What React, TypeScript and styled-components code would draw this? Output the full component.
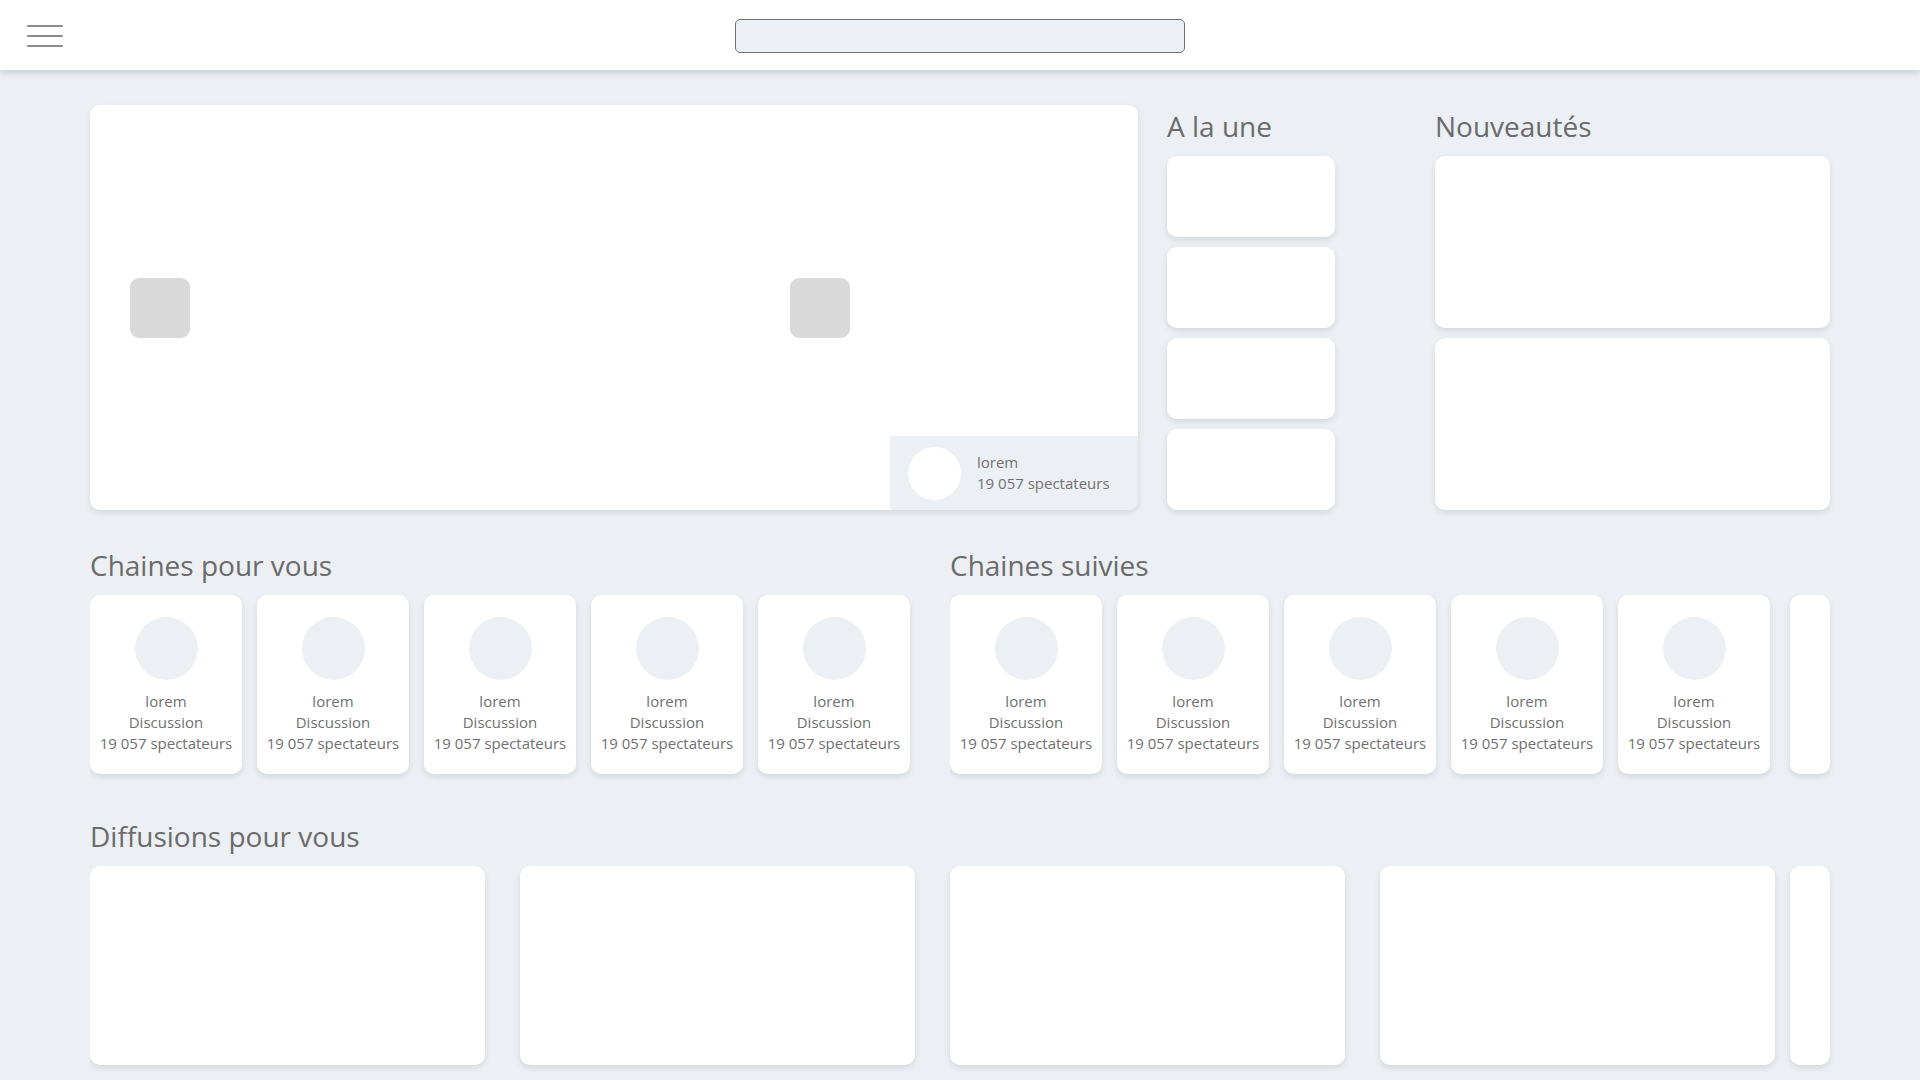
import React from 'react';
import styled, { createGlobalStyle } from 'styled-components';

const GlobalStyle = createGlobalStyle`
  * {
    box-sizing: border-box;
  }

  html,
  body {
    margin: 0;
    padding: 0;
    background: #ecf0f4;
    font-family: 'Open Sans', 'Noto Sans', sans-serif;
    color: #707070;
    overflow-x: hidden;
  }
`;

const Header = styled.header`
  height: 70px;
  background: #ffffff;
  box-shadow: 0 3px 6px rgba(0, 0, 0, 0.14);
  display: grid;
  grid-template-columns: 1fr 450px 1fr;
  align-items: center;
  padding: 0 27px;
  position: relative;
  z-index: 2;
`;

const Burger = styled.button`
  width: 36px;
  height: 22px;
  margin-top: 1px;
  padding: 0;
  border: 0;
  background: transparent;
  display: flex;
  flex-direction: column;
  justify-content: space-between;
  cursor: pointer;

  span {
    display: block;
    height: 2px;
    background: #8a8a8a;
    border-radius: 1px;
  }
`;

const Search = styled.input`
  width: 450px;
  height: 34px;
  margin-top: 1px;
  border: 1px solid #707070;
  border-radius: 5px;
  background: #ecf0f4;
  outline: none;
`;

const Main = styled.main`
  width: 1740px;
  margin: 0 auto;
  padding: 35px 0 12px;
`;

const TopRow = styled.section`
  display: flex;
  align-items: flex-start;
  height: 405px;
`;

const Card = styled.div<{ $w?: number; $h: number }>`
  flex: none;
  width: ${(p) => (p.$w ? `${p.$w}px` : '100%')};
  height: ${(p) => p.$h}px;
  background: #ffffff;
  border-radius: 10px;
  box-shadow: 0 3px 6px rgba(0, 0, 0, 0.1);
`;

const Player = styled.div`
  position: relative;
  flex: none;
  width: 1048px;
  height: 405px;
  background: #ffffff;
  border-radius: 10px;
  box-shadow: 0 3px 6px rgba(0, 0, 0, 0.1);
  display: flex;
  align-items: center;
  padding: 0 40px;
  overflow: hidden;
`;

const Arrow = styled.button`
  width: 60px;
  height: 60px;
  border: 0;
  padding: 0;
  border-radius: 9px;
  background: #d9d9d9;
  flex: none;
`;

const Stage = styled.div`
  width: 600px;
  height: 100%;
  flex: none;
`;

const LiveInfo = styled.div`
  position: absolute;
  right: 0;
  bottom: 0;
  width: 248px;
  height: 74px;
  background: #ecf0f4;
  border-radius: 0 0 10px 0;
  display: flex;
  align-items: center;
  gap: 16px;
  padding-left: 18px;
`;

const Avatar = styled.div<{ $size: number; $bg: string }>`
  width: ${(p) => p.$size}px;
  height: ${(p) => p.$size}px;
  border-radius: 50%;
  background: ${(p) => p.$bg};
  flex: none;
`;

const InfoText = styled.div`
  font-size: 15px;
  line-height: 21px;
  color: #707070;
`;

const Column = styled.div<{ $w: number; $ml?: string }>`
  width: ${(p) => p.$w}px;
  margin-left: ${(p) => p.$ml || '0'};
  display: flex;
  flex-direction: column;
  gap: 10px;
  flex: none;
`;

const Title = styled.h2`
  margin: 7px 0 6px;
  font-size: 28px;
  font-weight: 400;
  line-height: 1;
  color: #6b6b6b;
  white-space: nowrap;
`;

const SectionTitle = styled(Title)`
  margin: 0 0 16px;
`;

const Split = styled.div`
  display: grid;
  grid-template-columns: 820px 1fr;
  column-gap: 40px;
  margin-top: 41px;
`;

const Section = styled.section`
  min-width: 0;
`;

const Strip = styled.div<{ $gap: number }>`
  display: flex;
  gap: ${(p) => p.$gap}px;
  overflow: hidden;
  padding-bottom: 8px;
  margin-bottom: -8px;
  padding-right: 6px;
  margin-right: -6px;
`;

const Channel = styled.div`
  flex: none;
  width: 152px;
  height: 179px;
  background: #ffffff;
  border-radius: 10px;
  box-shadow: 0 3px 6px rgba(0, 0, 0, 0.1);
  display: flex;
  flex-direction: column;
  align-items: center;
  padding-top: 22px;
`;

const ChannelText = styled(InfoText)`
  margin-top: 11px;
  text-align: center;
  white-space: nowrap;
`;

const More = styled.div<{ $pull?: number }>`
  flex: none;
  width: 40px;
  margin-left: ${(p) => (p.$pull ? `${-p.$pull}px` : 'auto')};
  background: #ffffff;
  border-radius: 10px;
  box-shadow: 0 3px 6px rgba(0, 0, 0, 0.1);
`;

const Broadcasts = styled.section`
  margin-top: 48px;
`;

const ChannelCard = () => (
  <Channel>
    <Avatar $size={63} $bg="#ecf0f4" />
    <ChannelText>
      lorem
      <br />
      Discussion
      <br />
      19 057 spectateurs
    </ChannelText>
  </Channel>
);

export default function App() {
  return (
    <>
      <GlobalStyle />
      <Header>
        <Burger aria-label="menu">
          <span />
          <span />
          <span />
        </Burger>
        <Search aria-label="rechercher" />
      </Header>

      <Main>
        <TopRow>
          <Player>
            <Arrow aria-label="précédent" />
            <Stage />
            <Arrow aria-label="suivant" />
            <LiveInfo>
              <Avatar $size={53} $bg="#ffffff" />
              <InfoText>
                lorem
                <br />
                19 057 spectateurs
              </InfoText>
            </LiveInfo>
          </Player>

          <Column $w={168} $ml="29px">
            <Title>A la une</Title>
            {[0, 1, 2, 3].map((i) => (
              <Card key={i} $h={81} />
            ))}
          </Column>

          <Column $w={395} $ml="auto">
            <Title>Nouveautés</Title>
            <Card $h={172} />
            <Card $h={172} />
          </Column>
        </TopRow>

        <Split>
          <Section>
            <SectionTitle>Chaines pour vous</SectionTitle>
            <Strip $gap={15}>
              {[0, 1, 2, 3, 4].map((i) => (
                <ChannelCard key={i} />
              ))}
            </Strip>
          </Section>
          <Section>
            <SectionTitle>Chaines suivies</SectionTitle>
            <Strip $gap={15}>
              {[0, 1, 2, 3, 4].map((i) => (
                <ChannelCard key={i} />
              ))}
              <More />
            </Strip>
          </Section>
        </Split>

        <Broadcasts>
          <SectionTitle>Diffusions pour vous</SectionTitle>
          <Strip $gap={35}>
            {[0, 1, 2, 3].map((i) => (
              <Card key={i} $w={395} $h={199} />
            ))}
            <More $pull={20} />
          </Strip>
        </Broadcasts>
      </Main>
    </>
  );
}
